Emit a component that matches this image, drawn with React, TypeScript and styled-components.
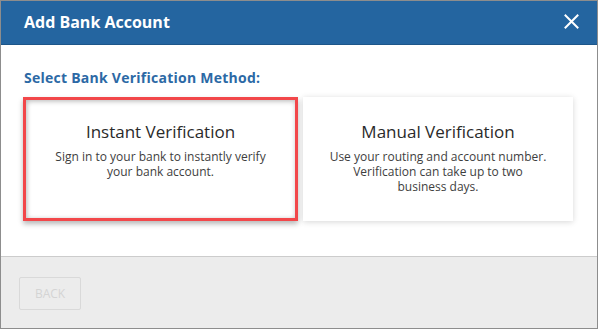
import styled, { createGlobalStyle } from "styled-components";

const GlobalStyle = createGlobalStyle`
  html, body {
    margin: 0;
    padding: 0;
    background: #ffffff;
  }
  body {
    font-family: "Open Sans", "Liberation Sans", sans-serif;
  }
`;

const Dialog = styled.div`
  width: 598px;
  height: 329px;
  box-sizing: border-box;
  border: 1px solid #8d8d8d;
  display: flex;
  flex-direction: column;
  background: #ffffff;
`;

const Header = styled.div`
  height: 43px;
  flex-shrink: 0;
  background: #2465a0;
  border-bottom: 1px solid #1d5689;
  display: flex;
  align-items: center;
  justify-content: space-between;
  padding: 0 18px 0 23px;
`;

const Title = styled.h1`
  margin: -2px 0 0;
  color: #ffffff;
  font-size: 16px;
  font-weight: 700;
  line-height: 22px;
`;

const CloseButton = styled.button`
  width: 15px;
  height: 15px;
  padding: 0;
  border: 0;
  background: transparent;
  cursor: pointer;
  display: flex;
  margin-top: -2px;
`;

const Body = styled.div`
  flex: 1;
  padding: 23px 22px 0 22px;
`;

const Heading = styled.h2`
  margin: 0 0 10px 1px;
  color: #2c69a5;
  font-size: 14px;
  font-weight: 700;
  letter-spacing: 0.25px;
  line-height: 19px;
`;

const Options = styled.div`
  display: grid;
  grid-template-columns: 275px 270px;
  column-gap: 5px;
`;

const Card = styled.div<{ $selected?: boolean }>`
  box-sizing: border-box;
  height: 124px;
  padding: 24px 10px 0;
  text-align: center;
  background: #ffffff;
  cursor: pointer;
  border: ${(p) => (p.$selected ? "3px solid #f2474a" : "0")};
  padding-top: ${(p) => (p.$selected ? "21px" : "24px")};
  box-shadow: ${(p) =>
    p.$selected
      ? "0 3px 5px rgba(0,0,0,0.28), inset 0 2px 5px rgba(0,0,0,0.18), inset 2px 0 4px rgba(0,0,0,0.12)"
      : "0 1px 6px rgba(0,0,0,0.16)"};
`;

const CardTitle = styled.div`
  color: #2a2a2a;
  font-size: 17px;
  line-height: 22px;
`;

const CardText = styled.div`
  max-width: 219px;
  margin: 6px auto 0;
  color: #3e3e3e;
  font-size: 12px;
  line-height: 15px;
`;

const Footer = styled.div`
  height: 51px;
  flex-shrink: 0;
  background: #ececec;
  border-top: 1px solid #cccccc;
  padding: 20px 0 0 18px;
`;

const BackButton = styled.button`
  width: 62px;
  height: 33px;
  box-sizing: border-box;
  border: 1px solid #d9d9d9;
  border-radius: 2px;
  background: transparent;
  color: #d4d4d4;
  font-family: "Open Sans", "Liberation Sans", sans-serif;
  font-size: 12px;
  padding: 0;
  cursor: default;
`;

const CloseIcon = () => (
  <svg width="15" height="15" viewBox="0 0 15 15">
    <path
      d="M1.5 1.5 L13.5 13.5 M13.5 1.5 L1.5 13.5"
      stroke="#ffffff"
      strokeWidth="2"
      strokeLinecap="square"
    />
  </svg>
);

export default function App() {
  return (
    <>
      <GlobalStyle />
      <Dialog>
        <Header>
          <Title>Add Bank Account</Title>
          <CloseButton aria-label="Close">
            <CloseIcon />
          </CloseButton>
        </Header>
        <Body>
          <Heading>Select Bank Verification Method:</Heading>
          <Options>
            <Card $selected>
              <CardTitle>Instant Verification</CardTitle>
              <CardText>
                Sign in to your bank to instantly verify your bank account.
              </CardText>
            </Card>
            <Card>
              <CardTitle>Manual Verification</CardTitle>
              <CardText>
                Use your routing and account number. Verification can take up
                to two business days.
              </CardText>
            </Card>
          </Options>
        </Body>
        <Footer>
          <BackButton disabled>BACK</BackButton>
        </Footer>
      </Dialog>
    </>
  );
}
